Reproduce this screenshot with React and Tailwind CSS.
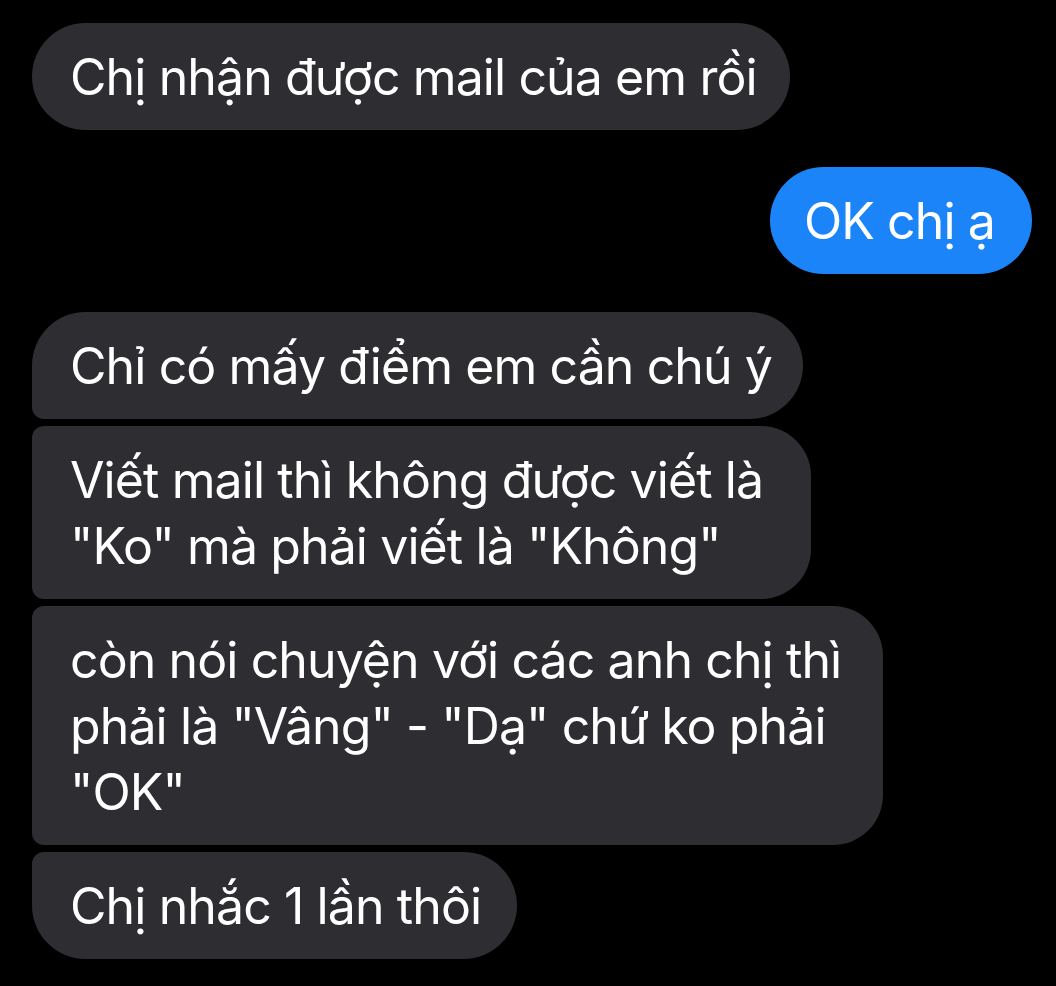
export default function App() {
  const gray = "bg-[#2e2d32]";
  return (
    <div className="w-[1056px] h-[986px] bg-black overflow-hidden pt-[23px] pl-[32px] pr-[24px] text-white text-[50px] leading-[66px] tracking-[-0.9px]" style={{ fontFamily: "Inter, 'Noto Sans', sans-serif" }}>
      <div className="flex flex-col">
        <div className="flex">
          <div className={`${gray} rounded-[54px] pl-[38px] pr-[33px] py-[20.5px]`}>Chị nhận được mail của em rồi</div>
        </div>
        <div className="flex justify-end mt-[37px]">
          <div className="bg-[#1c84f9] rounded-[54px] pl-[34px] pr-[37px] py-[20.5px]">OK chị ạ</div>
        </div>
        <div className="flex flex-col items-start gap-[7px] mt-[38px]">
          <div className={`${gray} rounded-[54px] rounded-bl-[12px] pl-[38px] pr-[31px] py-[20.5px]`}>Chỉ có mấy điểm em cần chú ý</div>
          <div className={`${gray} rounded-r-[50px] rounded-l-[12px] pl-[38px] pr-[48px] py-[20.5px]`}>Viết mail thì không được viết là<br />"Ko" mà phải viết là "Không"</div>
          <div className={`${gray} rounded-r-[50px] rounded-l-[12px] pl-[38px] pr-[42px] py-[20.5px]`}>còn nói chuyện với các anh chị thì<br />phải là "Vâng" - "Dạ" chứ ko phải<br />"OK"</div>
          <div className={`${gray} rounded-[54px] rounded-tl-[12px] pl-[38px] pr-[36px] py-[20.5px]`}>Chị nhắc 1 lần thôi</div>
        </div>
      </div>
    </div>
  );
}
